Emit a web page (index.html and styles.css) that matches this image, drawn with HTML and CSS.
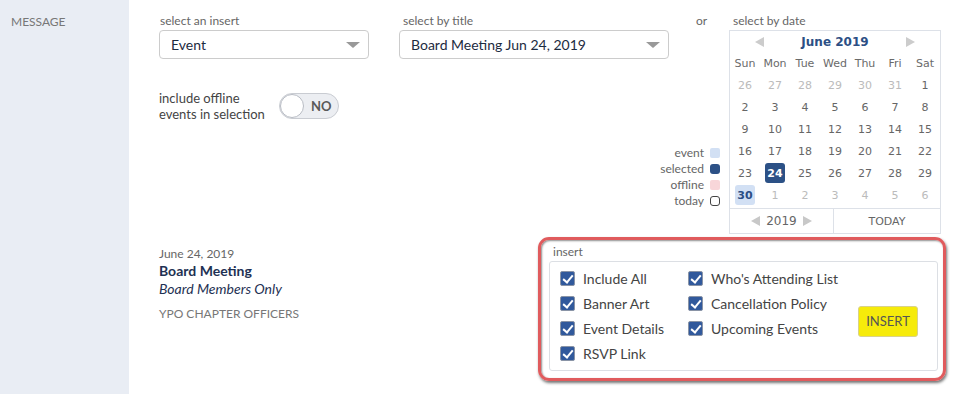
FILE: index.html
```html
<!DOCTYPE html>
<html>
<head>
    <link rel="stylesheet" href="styles.css">
</head>
<body>
    <div class="sidebar">
        <span class="section-name">MESSAGE</span>
    </div>

    <div class="main">
        <div class="pickers">
            <div class="pickers-left">
                <div class="select-row">
                    <div class="field field-insert">
                        <label class="field-label">select an insert</label>
                        <div class="select">
                            <span>Event</span>
                            <span class="caret"></span>
                        </div>
                    </div>
                    <div class="field field-title">
                        <label class="field-label">select by title</label>
                        <div class="select">
                            <span>Board Meeting Jun 24, 2019</span>
                            <span class="caret"></span>
                        </div>
                    </div>
                    <span class="or">or</span>
                </div>

                <div class="offline-row">
                    <span class="offline-label">include offline events in selection</span>
                    <div class="toggle">
                        <span class="knob"></span>
                        <span class="toggle-text">NO</span>
                    </div>
                </div>

                <ul class="legend">
                    <li>event <span class="swatch swatch-event"></span></li>
                    <li>selected <span class="swatch swatch-selected"></span></li>
                    <li>offline <span class="swatch swatch-offline"></span></li>
                    <li>today <span class="swatch swatch-today"></span></li>
                </ul>
            </div>

            <div class="field field-date">
                <label class="field-label">select by date</label>
                <div class="calendar">
                    <div class="cal-head">
                        <span class="arrow arrow-left"></span>
                        <span class="cal-title">June 2019</span>
                        <span class="arrow arrow-right"></span>
                    </div>
                    <div class="cal-grid">
                        <span class="dow">Sun</span><span class="dow">Mon</span><span class="dow">Tue</span><span class="dow">Wed</span><span class="dow">Thu</span><span class="dow">Fri</span><span class="dow">Sat</span>

                        <span class="day other">26</span><span class="day other">27</span><span class="day other">28</span><span class="day other">29</span><span class="day other">30</span><span class="day other">31</span><span class="day">1</span>
                        <span class="day">2</span><span class="day">3</span><span class="day">4</span><span class="day">5</span><span class="day">6</span><span class="day">7</span><span class="day">8</span>
                        <span class="day">9</span><span class="day">10</span><span class="day">11</span><span class="day">12</span><span class="day">13</span><span class="day">14</span><span class="day">15</span>
                        <span class="day">16</span><span class="day">17</span><span class="day">18</span><span class="day">19</span><span class="day">20</span><span class="day">21</span><span class="day">22</span>
                        <span class="day">23</span><span class="day"><b class="mark selected">24</b></span><span class="day">25</span><span class="day">26</span><span class="day">27</span><span class="day">28</span><span class="day">29</span>
                        <span class="day"><b class="mark event">30</b></span><span class="day other">1</span><span class="day other">2</span><span class="day other">3</span><span class="day other">4</span><span class="day other">5</span><span class="day other">6</span>
                    </div>
                    <div class="cal-foot">
                        <div class="year-nav">
                            <span class="arrow arrow-left"></span>
                            <span>2019</span>
                            <span class="arrow arrow-right"></span>
                        </div>
                        <div class="today-btn">TODAY</div>
                    </div>
                </div>
            </div>
        </div>

        <div class="details">
            <div class="event-info">
                <div class="event-date">June 24, 2019</div>
                <div class="event-title">Board Meeting</div>
                <div class="event-sub">Board Members Only</div>
                <div class="event-group">YPO CHAPTER OFFICERS</div>
            </div>

            <div class="insert-panel">
                <div class="field-label">insert</div>
                <div class="insert-box">
                    <div class="checks">
                        <label class="check"><span class="box"></span>Include All</label>
                        <label class="check"><span class="box"></span>Banner Art</label>
                        <label class="check"><span class="box"></span>Event Details</label>
                        <label class="check"><span class="box"></span>RSVP Link</label>
                        <label class="check"><span class="box"></span>Who's Attending List</label>
                        <label class="check"><span class="box"></span>Cancellation Policy</label>
                        <label class="check"><span class="box"></span>Upcoming Events</label>
                    </div>
                    <button class="insert-btn">INSERT</button>
                </div>
            </div>
        </div>
    </div>
</body>
</html>
```

FILE: styles.css
```css
body {
    margin: 0;
    height: 100vh;
    display: flex;
    font-family: Lato, "Open Sans", sans-serif;
    color: #1f2d3d;
    background: #fff;
    overflow: hidden;
}

.sidebar {
    width: 129px;
    flex-shrink: 0;
    background: #e9edf4;
    padding: 10px 0 0 11px;
    box-sizing: border-box;
}

.section-name {
    font-size: 12px;
    color: #777;
}

.main {
    flex: 1;
    padding: 14px 0 0 30px;
}

/* top area: selects on the left, calendar on the right */
.pickers {
    display: flex;
}

.pickers-left {
    width: 561px;
    display: flex;
    flex-direction: column;
    margin-right: 9px;
}

.select-row {
    display: flex;
    align-items: flex-start;
}

.field-label {
    display: block;
    font-size: 12px;
    color: #666;
    height: 16px;
    line-height: 14px;
    padding-left: 1px;
}

.field-insert {
    width: 210px;
    margin-right: 30px;
}

.field-title {
    width: 270px;
    margin-right: 27px;
}

.field-title .field-label {
    padding-left: 4px;
}

.or {
    font-size: 12px;
    color: #666;
    line-height: 14px;
}

.select {
    height: 29px;
    border: 1px solid #ccc;
    border-radius: 4px;
    box-sizing: border-box;
    display: flex;
    align-items: center;
    justify-content: space-between;
    padding: 0 8px 0 11px;
    font-size: 14px;
    color: #1d2b3f;
}

.caret {
    width: 0;
    height: 0;
    border-left: 7px solid transparent;
    border-right: 7px solid transparent;
    border-top: 6px solid #999;
}

.offline-row {
    display: flex;
    align-items: center;
    margin-top: 31px;
}

.offline-label {
    width: 112px;
    margin-right: 8px;
    font-size: 13px;
    line-height: 16px;
    color: #444;
}

.toggle {
    width: 60px;
    height: 26px;
    border: 1px solid #c9ccd2;
    border-radius: 13px;
    background: #eceef2;
    box-sizing: border-box;
    display: flex;
    align-items: center;
}

.knob {
    width: 24px;
    height: 24px;
    border-radius: 50%;
    background: #fff;
    border: 1px solid #b8bcc4;
    box-sizing: border-box;
}

.toggle-text {
    margin-left: 7px;
    font-size: 13px;
    font-weight: bold;
    color: #5a5a5a;
}

.legend {
    list-style: none;
    margin: 23px 0 0;
    padding: 0;
    align-self: flex-end;
    text-align: right;
    font-size: 12px;
    color: #666;
}

.legend li {
    height: 16px;
    line-height: 16px;
    display: flex;
    align-items: center;
    justify-content: flex-end;
}

.swatch {
    width: 10px;
    height: 10px;
    margin-left: 6px;
    border-radius: 2px;
    box-sizing: border-box;
}

.swatch-event { background: #d2e0f4; }
.swatch-selected { background: #2c5186; border-radius: 3px; }
.swatch-offline { background: #f8d6d9; }
.swatch-today { border: 1px solid #444; border-radius: 3px; }

/* date picker */
.field-date {
    width: 212px;
}

.field-date .field-label {
    padding-left: 4px;
}

.calendar {
    border: 1px solid #dde1e8;
    font-family: "DejaVu Sans", Verdana, sans-serif;
    font-size: 11px;
    color: #666;
}

.cal-head {
    height: 21px;
    display: flex;
    align-items: center;
    justify-content: space-between;
    padding: 0 25px 0 25px;
}

.cal-title {
    font-weight: bold;
    font-size: 12px;
    color: #2c4f85;
}

.arrow {
    width: 0;
    height: 0;
    border-top: 5px solid transparent;
    border-bottom: 5px solid transparent;
}

.arrow-left { border-right: 9px solid #ccc; }
.arrow-right { border-left: 9px solid #ccc; }

.cal-grid {
    display: grid;
    grid-template-columns: repeat(7, 30px);
    grid-auto-rows: 22px;
}

.dow,
.day {
    display: flex;
    align-items: center;
    justify-content: center;
}

.dow {
    color: #6a6a6a;
}

.day.other {
    color: #bbb;
}

.mark {
    width: 20px;
    height: 20px;
    border-radius: 3px;
    display: flex;
    align-items: center;
    justify-content: center;
}

.mark.selected {
    background: #2c5186;
    color: #fff;
}

.mark.event {
    background: #d2e0f4;
    color: #2c4f85;
}

.cal-foot {
    display: flex;
    height: 24px;
    border-top: 1px solid #dde1e8;
    margin-top: 2px;
    color: #666;
}

.year-nav {
    width: 103px;
    border-right: 1px solid #dde1e8;
    display: flex;
    align-items: center;
    justify-content: center;
    gap: 6px;
    font-size: 12px;
}

.year-nav .arrow-left { border-right-color: #c8c8c8; }
.year-nav .arrow-right { border-left-color: #c8c8c8; }

.today-btn {
    flex: 1;
    display: flex;
    align-items: center;
    justify-content: center;
}

/* bottom area */
.details {
    display: flex;
    align-items: flex-start;
    margin-top: 3px;
}

.event-info {
    width: 379px;
    padding-top: 9px;
}

.event-date {
    font-size: 12px;
    color: #666;
    line-height: 16px;
}

.event-title {
    font-size: 14px;
    font-weight: bold;
    color: #1e3153;
    line-height: 18px;
}

.event-sub {
    font-size: 14px;
    font-style: italic;
    color: #1e3153;
    line-height: 18px;
}

.event-group {
    margin-top: 8px;
    font-size: 12px;
    color: #777;
}

.insert-panel {
    width: 408px;
    height: 144px;
    box-sizing: border-box;
    border: 3px solid #e05b5d;
    border-radius: 11px;
    padding: 5px 5px 7px 8px;
    box-shadow: 1px 2px 3px rgba(0, 0, 0, 0.55), inset 1px 1px 2px rgba(0, 0, 0, 0.45);
}

.insert-panel .field-label {
    padding-left: 4px;
}

.insert-box {
    height: 110px;
    border: 1px solid #dcdfe4;
    border-radius: 3px;
    box-sizing: border-box;
    display: flex;
    align-items: center;
    padding: 0 19px 0 10px;
}

.checks {
    display: grid;
    grid-template-rows: repeat(4, 25px);
    grid-template-columns: 128px 160px;
    grid-auto-flow: column;
}

.check {
    display: flex;
    align-items: center;
    font-size: 14px;
    color: #444;
    white-space: nowrap;
}

.box {
    position: relative;
    width: 15px;
    height: 15px;
    margin-right: 8px;
    border: 1px solid #8a94a6;
    border-radius: 2px;
    background: #31599c;
    box-sizing: border-box;
}

.box::after {
    content: "";
    position: absolute;
    left: 4px;
    top: 1px;
    width: 4px;
    height: 8px;
    border-right: 2px solid #fff;
    border-bottom: 2px solid #fff;
    transform: rotate(40deg);
}

.insert-btn {
    margin: 10px 0 0 auto;
    width: 60px;
    height: 31px;
    background: #f6eb0a;
    border: 1px solid #d9d28a;
    border-radius: 3px;
    font-family: Lato, "Open Sans", sans-serif;
    font-size: 13px;
    color: #555;
    padding: 0;
}
```
